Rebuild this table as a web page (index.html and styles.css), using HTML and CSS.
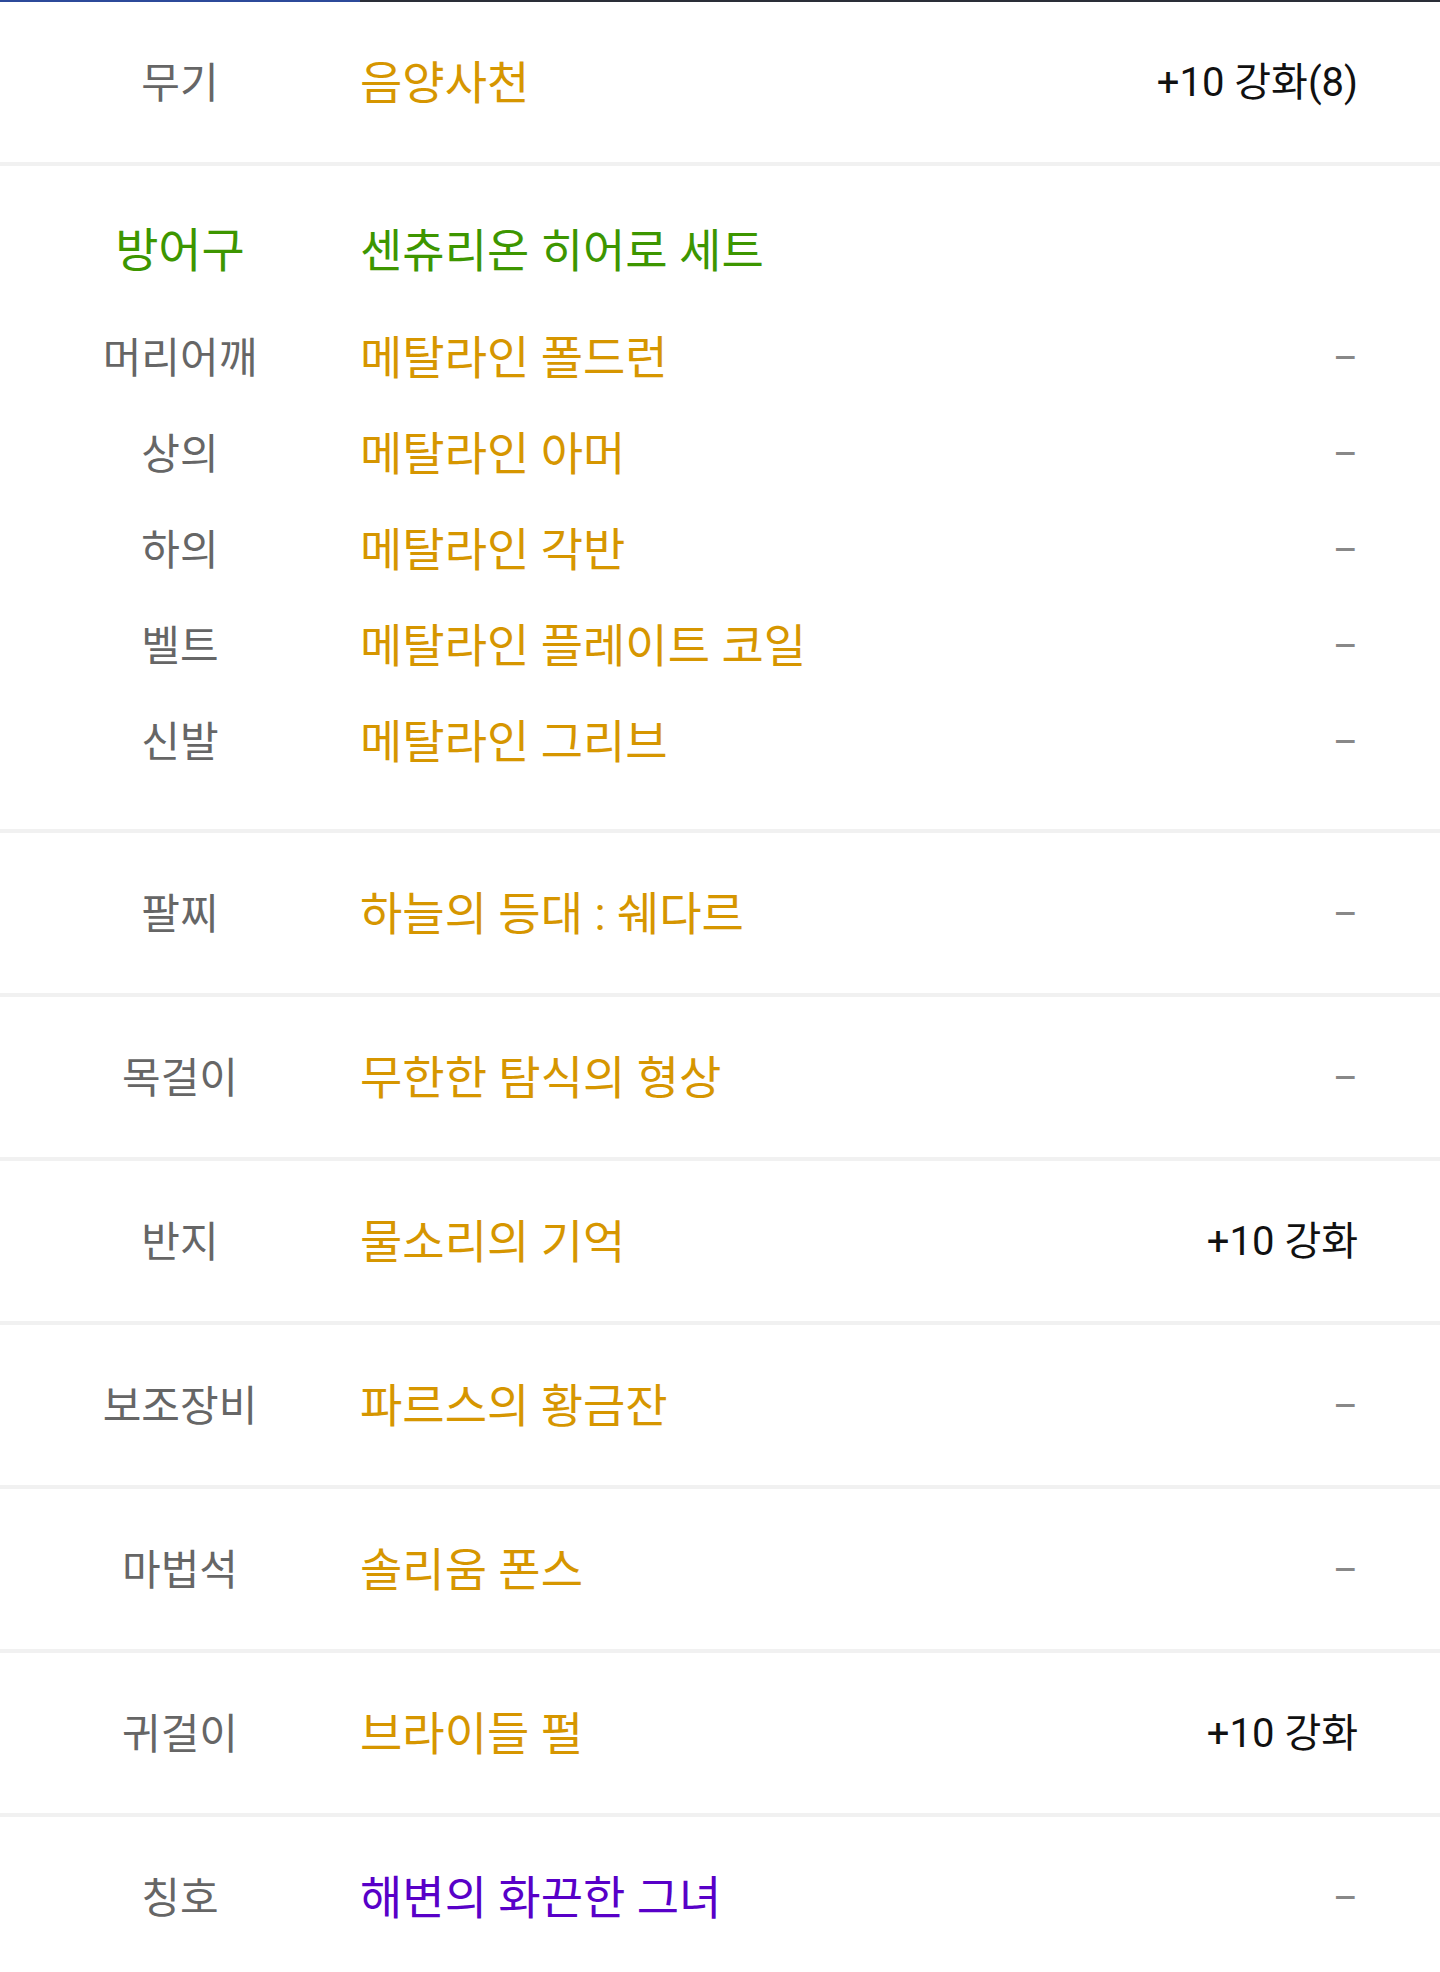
FILE: index.html
```html
<!DOCTYPE html>
<html lang="ko">
<head>
    <meta charset="UTF-8">
    <meta name="viewport" content="width=device-width, initial-scale=1.0">
    <title>장비</title>
    <link rel="stylesheet" href="styles.css">
</head>
<body>
    <div class="tab-bar">
        <div class="tab-indicator"></div>
    </div>

    <div class="equip-list">
        <div class="slot">
            <div class="slot-name">무기</div>
            <div class="item-name">음양사천</div>
            <div class="item-value">+10 강화(8)</div>
        </div>

        <div class="set-block">
            <div class="slot set-head">
                <div class="slot-name set">방어구</div>
                <div class="item-name set">센츄리온 히어로 세트</div>
                <div class="item-value"></div>
            </div>
            <div class="slot sub">
                <div class="slot-name">머리어깨</div>
                <div class="item-name">메탈라인 폴드런</div>
                <div class="item-value none">–</div>
            </div>
            <div class="slot sub">
                <div class="slot-name">상의</div>
                <div class="item-name">메탈라인 아머</div>
                <div class="item-value none">–</div>
            </div>
            <div class="slot sub">
                <div class="slot-name">하의</div>
                <div class="item-name">메탈라인 각반</div>
                <div class="item-value none">–</div>
            </div>
            <div class="slot sub">
                <div class="slot-name">벨트</div>
                <div class="item-name">메탈라인 플레이트 코일</div>
                <div class="item-value none">–</div>
            </div>
            <div class="slot sub">
                <div class="slot-name">신발</div>
                <div class="item-name">메탈라인 그리브</div>
                <div class="item-value none">–</div>
            </div>
        </div>

        <div class="slot">
            <div class="slot-name">팔찌</div>
            <div class="item-name">하늘의 등대 : 쉐다르</div>
            <div class="item-value none">–</div>
        </div>

        <div class="slot">
            <div class="slot-name">목걸이</div>
            <div class="item-name">무한한 탐식의 형상</div>
            <div class="item-value none">–</div>
        </div>

        <div class="slot">
            <div class="slot-name">반지</div>
            <div class="item-name">물소리의 기억</div>
            <div class="item-value">+10 강화</div>
        </div>

        <div class="slot">
            <div class="slot-name">보조장비</div>
            <div class="item-name">파르스의 황금잔</div>
            <div class="item-value none">–</div>
        </div>

        <div class="slot">
            <div class="slot-name">마법석</div>
            <div class="item-name">솔리움 폰스</div>
            <div class="item-value none">–</div>
        </div>

        <div class="slot">
            <div class="slot-name">귀걸이</div>
            <div class="item-name">브라이들 펄</div>
            <div class="item-value">+10 강화</div>
        </div>

        <div class="slot">
            <div class="slot-name">칭호</div>
            <div class="item-name title">해변의 화끈한 그녀</div>
            <div class="item-value none">–</div>
        </div>
    </div>
</body>
</html>
```

FILE: styles.css
```css
body {
    margin: 0;
    padding: 0;
    background: #fff;
    font-family: Roboto, "Noto Sans CJK KR", sans-serif;
    color: #111;
}
.tab-bar {
    height: 2px;
    background: #2a2e38;
}
.tab-indicator {
    width: 360px;
    height: 100%;
    background: #2c4a9a;
}
.equip-list > .slot,
.set-block {
    border-bottom: 4px solid #f1f1f1;
}
.slot {
    display: grid;
    grid-template-columns: 360px 1fr auto;
    align-items: center;
    box-sizing: border-box;
    height: 164px;
    padding: 0 82px 6px 0;
}
.set-block {
    padding: 31px 0 43px;
}
.slot.sub {
    height: 96px;
    padding-bottom: 0;
}
.slot.set-head {
    height: 109px;
    padding-bottom: 0;
    align-items: start;
}
.slot.set-head > div {
    line-height: 108px;
}
.slot-name {
    text-align: center;
    font-size: 42px;
    color: #666;
}
.slot-name.set {
    font-size: 47px;
    color: #3d9600;
}
.item-name {
    font-size: 46px;
    color: #d69600;
}
.item-name.set {
    color: #3d9600;
}
.item-name.title {
    color: #5800c8;
}
.item-value {
    font-size: 40px;
    color: #111;
    text-align: right;
}
.item-value.none {
    color: #888;
    font-size: 38px;
    padding-top: 8px;
}
```
